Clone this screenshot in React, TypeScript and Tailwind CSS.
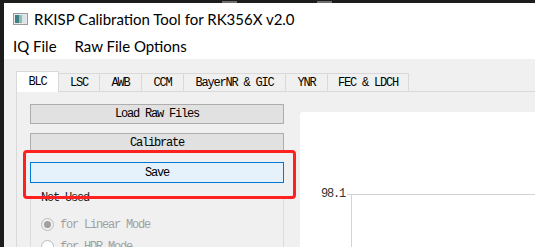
import React from "react";

const mono = { fontFamily: '"Liberation Mono", "DejaVu Sans Mono", monospace' };
const ui = { fontFamily: 'Lato, "Noto Sans", "Liberation Sans", sans-serif' };

const tabs = [
  { label: "BLC", w: 43 },
  { label: "LSC", w: 41 },
  { label: "AWB", w: 42 },
  { label: "CCM", w: 42 },
  { label: "BayerNR & GIC", w: 102 },
  { label: "YNR", w: 42 },
  { label: "FEC & LDCH", w: 81 },
];

function WinIcon() {
  return (
    <svg width="15" height="12" viewBox="0 0 15 12">
      <rect x="0.5" y="0.5" width="14" height="11" fill="#e8e8e8" stroke="#9a9a9a" />
      <rect x="2" y="2" width="4" height="8" fill="#3f7f86" />
      <rect x="6" y="2" width="3" height="8" fill="#8cc0a8" />
      <rect x="9" y="2" width="4" height="8" fill="#d8e4ea" />
    </svg>
  );
}

export default function App() {
  return (
    <div className="relative w-[535px] h-[247px] overflow-hidden bg-[#1c1c1c]">
      {/* top dark strip */}
      <div className="relative h-[3px]">
        <div className="absolute left-[222px] top-[1px] h-[2px] w-[15px] bg-[#6e6e6e]" />
        <div className="absolute left-[317px] top-[1px] h-[2px] w-[15px] bg-[#6e6e6e]" />
      </div>
      <div className="ml-[4px] h-[244px] bg-white flex flex-col overflow-hidden">
        {/* title bar */}
        <div className="h-[31px] shrink-0 flex items-center pl-[9px] pt-[1px]">
          <WinIcon />
          <span className="ml-[6px] text-[15px] text-black leading-none whitespace-pre" style={ui}>
            RKISP Calibration Tool for RK356X v2.0
          </span>
        </div>
        {/* menu bar */}
        <div className="h-[25px] shrink-0 flex items-center pl-[9px] gap-[18px] text-[15px] text-black leading-none whitespace-pre" style={ui}>
          <span>IQ File</span>
          <span>Raw File Options</span>
        </div>
        {/* body */}
        <div className="flex-1 min-h-0 bg-[#f0f0f0] pt-[12px] pl-[12px]" style={mono}>
          {/* tabs */}
          <div className="flex items-end h-[20px] relative z-10">
            {tabs.map((t, i) =>
              i === 0 ? (
                <div
                  key={t.label}
                  className="h-[21px] mb-[-1px] bg-white border border-b-0 border-[#d9d9d9] flex items-center justify-center text-[12px] tracking-[-1.2px] text-black"
                  style={{ width: t.w }}
                >
                  {t.label}
                </div>
              ) : (
                <div
                  key={t.label}
                  className="h-[18px] bg-[#f0f0f0] border-t border-r border-[#d9d9d9] flex items-center justify-center text-[12px] tracking-[-1.2px] text-black whitespace-pre"
                  style={{ width: t.w }}
                >
                  {t.label}
                </div>
              )
            )}
          </div>
          {/* panel */}
          <div className="h-[200px] border-t border-l border-[#d9d9d9] bg-[#f0f0f0] flex pl-[13px] pt-[12px]">
            <div className="w-[254px] shrink-0 flex flex-col">
              <div className="h-[20px] bg-[#e1e1e1] border border-[#adadad] flex items-center justify-center text-[12px] tracking-[-1.2px] text-black whitespace-pre">
                Load Raw Files
              </div>
              <div className="mt-[9px] h-[20px] bg-[#e1e1e1] border border-[#adadad] flex items-center justify-center text-[12px] tracking-[-1.2px] text-black">
                Calibrate
              </div>
              <div className="mt-[9px] h-[21px] bg-[#e5f1fb] border border-[#0078d7] flex items-center justify-center text-[12px] tracking-[-1.2px] text-black">
                Save
              </div>
              {/* group box */}
              <div className="relative mt-[14px] border border-[#dcdcdc] h-[80px]">
                <span className="absolute left-[9px] top-[-7px] px-[1px] bg-[#f0f0f0] text-[12px] leading-[14px] tracking-[-1.2px] text-[#222] whitespace-pre">
                  Not Used
                </span>
                <div className="pt-[20px] pl-[10px] flex flex-col gap-[9px] text-[12px] tracking-[-1.2px] text-[#a0a0a0]">
                  <div className="flex items-center gap-[6px] h-[13px] whitespace-pre">
                    <span className="w-[13px] h-[13px] rounded-full border border-[#bcbcbc] bg-[#f0f0f0] flex items-center justify-center">
                      <span className="w-[7px] h-[7px] rounded-full bg-[#a0a0a0]" />
                    </span>
                    for Linear Mode
                  </div>
                  <div className="flex items-center gap-[6px] h-[13px] whitespace-pre">
                    <span className="w-[13px] h-[13px] rounded-full border border-[#bcbcbc] bg-white" />
                    for HDR Mode
                  </div>
                </div>
              </div>
            </div>
            {/* chart */}
            <div className="ml-[16px] mt-[8px] flex-1 bg-white rounded-tl-[3px]">
              <div className="flex mt-[76px]">
                <span className="w-[45px] h-[12px] text-right text-[12px] leading-[12px] tracking-[-1.2px] text-[#333]">
                  98.1
                </span>
                <div className="ml-[2px] mt-[6px] flex-1 border-t border-[#d3d3d3]">
                  <div className="ml-[4px] h-[60px] border-l border-[#d3d3d3]" />
                </div>
              </div>
            </div>
          </div>
        </div>
      </div>
      {/* red annotation */}
      <div className="absolute left-[23px] top-[150px] w-[273px] h-[49px] border-[3px] border-[#ff2020] rounded-[4px]" />
    </div>
  );
}
